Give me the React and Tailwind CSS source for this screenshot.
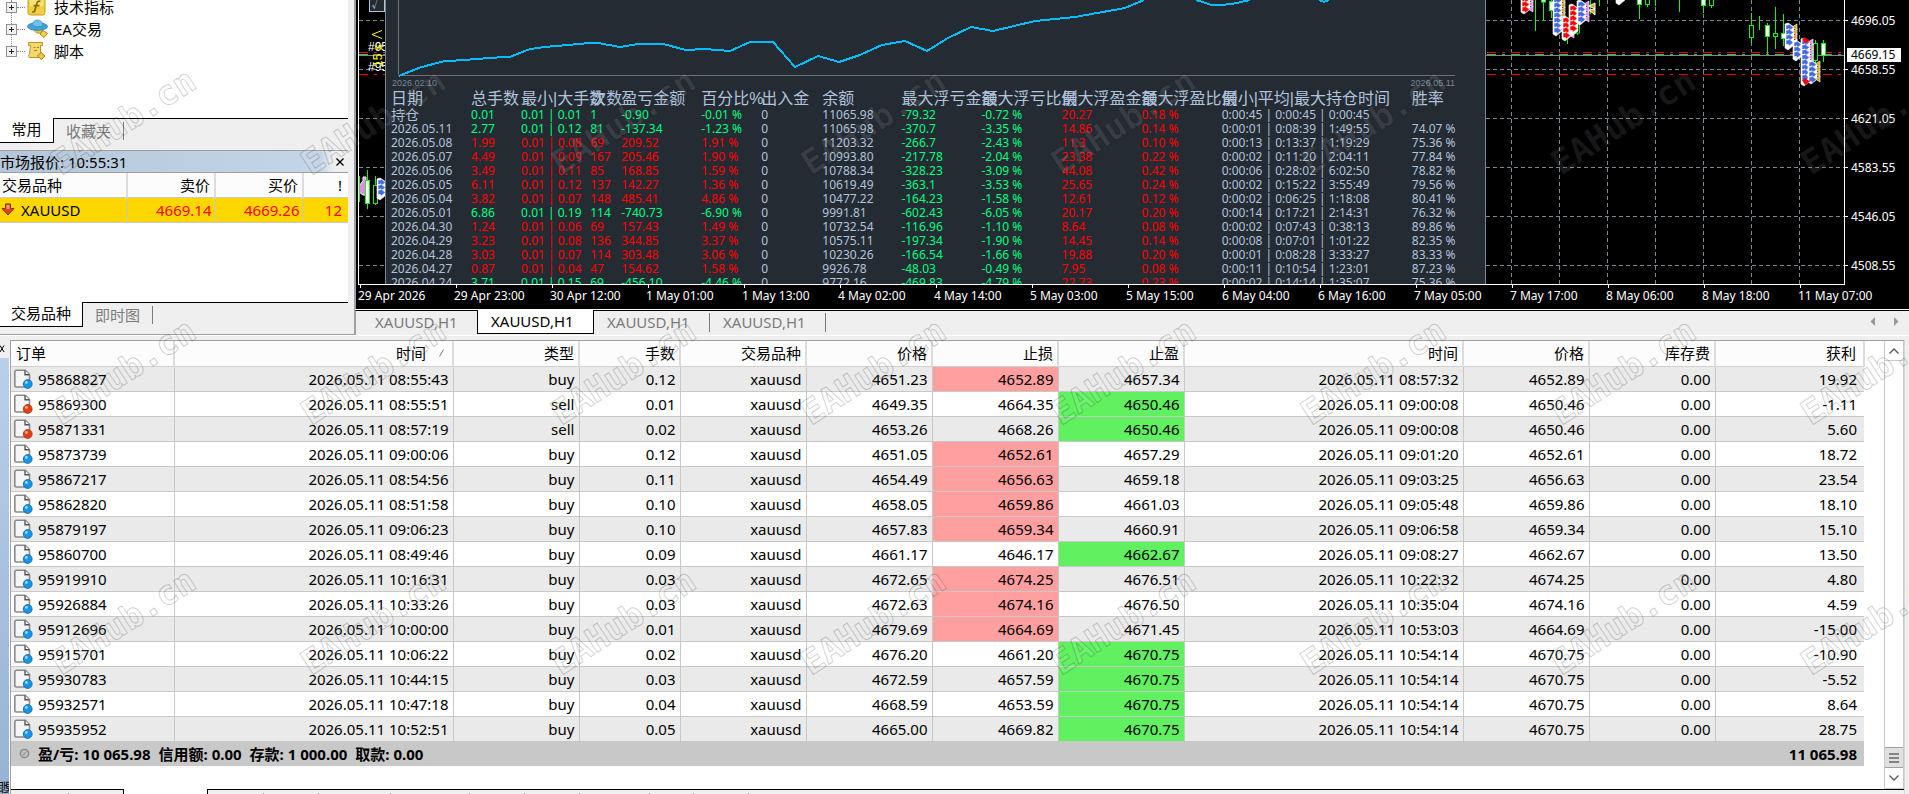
import React from 'react';

const stats = [
  ['持仓', '0.01', '0.01 | 0.01', '1', '-0.90', '-0.01 %', '11065.98', '-79.32', '-0.72 %', '20.27', '0.18 %', '0:00:45 | 0:00:45 | 0:00:45', ''],
  ['2026.05.11', '2.77', '0.01 | 0.12', '81', '-137.34', '-1.23 %', '11065.98', '-370.7', '-3.35 %', '14.86', '0.14 %', '0:00:01 | 0:08:39 | 1:49:55', '74.07 %'],
  ['2026.05.08', '1.99', '0.01 | 0.08', '69', '209.52', '1.91 %', '11203.32', '-266.7', '-2.43 %', '11.3', '0.10 %', '0:00:13 | 0:13:37 | 1:19:29', '75.36 %'],
  ['2026.05.07', '4.49', '0.01 | 0.09', '167', '205.46', '1.90 %', '10993.80', '-217.78', '-2.04 %', '23.38', '0.22 %', '0:00:02 | 0:11:20 | 2:04:11', '77.84 %'],
  ['2026.05.06', '3.49', '0.01 | 0.11', '85', '168.85', '1.59 %', '10788.34', '-328.23', '-3.09 %', '44.08', '0.42 %', '0:00:06 | 0:28:02 | 6:02:50', '78.82 %'],
  ['2026.05.05', '6.11', '0.01 | 0.12', '137', '142.27', '1.36 %', '10619.49', '-363.1', '-3.53 %', '25.65', '0.24 %', '0:00:02 | 0:15:22 | 3:55:49', '79.56 %'],
  ['2026.05.04', '3.82', '0.01 | 0.07', '148', '485.41', '4.86 %', '10477.22', '-164.23', '-1.58 %', '12.61', '0.12 %', '0:00:02 | 0:06:25 | 1:18:08', '80.41 %'],
  ['2026.05.01', '6.86', '0.01 | 0.19', '114', '-740.73', '-6.90 %', '9991.81', '-602.43', '-6.05 %', '20.17', '0.20 %', '0:00:14 | 0:17:21 | 2:14:31', '76.32 %'],
  ['2026.04.30', '1.24', '0.01 | 0.06', '69', '157.43', '1.49 %', '10732.54', '-116.96', '-1.10 %', '8.64', '0.08 %', '0:00:02 | 0:07:43 | 0:38:13', '89.86 %'],
  ['2026.04.29', '3.23', '0.01 | 0.08', '136', '344.85', '3.37 %', '10575.11', '-197.34', '-1.90 %', '14.45', '0.14 %', '0:00:08 | 0:07:01 | 1:01:22', '82.35 %'],
  ['2026.04.28', '3.03', '0.01 | 0.07', '114', '303.48', '3.06 %', '10230.26', '-166.54', '-1.66 %', '19.88', '0.20 %', '0:00:01 | 0:08:28 | 3:33:27', '83.33 %'],
  ['2026.04.27', '0.87', '0.01 | 0.04', '47', '154.62', '1.58 %', '9926.78', '-48.03', '-0.49 %', '7.95', '0.08 %', '0:00:11 | 0:10:54 | 1:23:01', '87.23 %'],
  ['2026.04.24', '3.71', '0.01 | 0.15', '69', '-456.10', '-4.46 %', '9772.16', '-469.83', '-4.79 %', '22.73', '0.23 %', '0:00:02 | 0:14:14 | 1:35:07', '75.36 %'],
];

const statHeads = ['日期', '总手数', '最小|大手数', '次数', '盈亏金额', '百分比%', '出入金', '余额', '最大浮亏金额', '最大浮亏比例', '最大浮盈金额', '最大浮盈比例', '最小|平均|最大持仓时间', '胜率'];
const statCols = ['w-[80px]', 'w-[50px]', 'w-[69px]', 'w-[31px]', 'w-[80px]', 'w-[60px]', 'w-[61px]', 'w-[79px]', 'w-[80px]', 'w-[80px]', 'w-[80px]', 'w-[80px]', 'w-[190px]', 'w-[70px]'];

// order, open time, type, lots, open price, s/l, t/p, close time, close price, profit, which level was hit
const orders = [
  ['95868827', '08:55:43', 'buy', '0.12', '4651.23', '4652.89', '4657.34', '08:57:32', '4652.89', '19.92', 'sl'],
  ['95869300', '08:55:51', 'sell', '0.01', '4649.35', '4664.35', '4650.46', '09:00:08', '4650.46', '-1.11', 'tp'],
  ['95871331', '08:57:19', 'sell', '0.02', '4653.26', '4668.26', '4650.46', '09:00:08', '4650.46', '5.60', 'tp'],
  ['95873739', '09:00:06', 'buy', '0.12', '4651.05', '4652.61', '4657.29', '09:01:20', '4652.61', '18.72', 'sl'],
  ['95867217', '08:54:56', 'buy', '0.11', '4654.49', '4656.63', '4659.18', '09:03:25', '4656.63', '23.54', 'sl'],
  ['95862820', '08:51:58', 'buy', '0.10', '4658.05', '4659.86', '4661.03', '09:05:48', '4659.86', '18.10', 'sl'],
  ['95879197', '09:06:23', 'buy', '0.10', '4657.83', '4659.34', '4660.91', '09:06:58', '4659.34', '15.10', 'sl'],
  ['95860700', '08:49:46', 'buy', '0.09', '4661.17', '4646.17', '4662.67', '09:08:27', '4662.67', '13.50', 'tp'],
  ['95919910', '10:16:31', 'buy', '0.03', '4672.65', '4674.25', '4676.51', '10:22:32', '4674.25', '4.80', 'sl'],
  ['95926884', '10:33:26', 'buy', '0.03', '4672.63', '4674.16', '4676.50', '10:35:04', '4674.16', '4.59', 'sl'],
  ['95912696', '10:00:00', 'buy', '0.01', '4679.69', '4664.69', '4671.45', '10:53:03', '4664.69', '-15.00', 'sl'],
  ['95915701', '10:06:22', 'buy', '0.02', '4676.20', '4661.20', '4670.75', '10:54:14', '4670.75', '-10.90', 'tp'],
  ['95930783', '10:44:15', 'buy', '0.03', '4672.59', '4657.59', '4670.75', '10:54:14', '4670.75', '-5.52', 'tp'],
  ['95932571', '10:47:18', 'buy', '0.04', '4668.59', '4653.59', '4670.75', '10:54:14', '4670.75', '8.64', 'tp'],
  ['95935952', '10:52:51', 'buy', '0.05', '4665.00', '4669.82', '4670.75', '10:54:14', '4670.75', '28.75', 'tp'],
];
const orderHeads = ['订单', '时间', '类型', '手数', '交易品种', '价格', '止损', '止盈', '时间', '价格', '库存费', '获利'];
const orderCols = ['w-[163px]', 'w-[279px]', 'w-[126px]', 'w-[101px]', 'w-[126px]', 'w-[126px]', 'w-[126px]', 'w-[126px]', 'w-[279px]', 'w-[126px]', 'w-[126px]', 'w-[149px]'];

const times = ['29 Apr 2026', '29 Apr 23:00', '30 Apr 12:00', '1 May 01:00', '1 May 13:00', '4 May 02:00', '4 May 14:00', '5 May 03:00', '5 May 15:00', '6 May 04:00', '6 May 16:00', '7 May 05:00', '7 May 17:00', '8 May 06:00', '8 May 18:00', '11 May 07:00'];
const prices = ['4696.05', '4658.55', '4621.05', '4583.55', '4546.05', '4508.55'];

/* ---------- icons ---------- */
function IndicatorIcon() {
  return (
    <svg width="20" height="20" viewBox="0 0 20 20" aria-hidden="true">
      <rect x="1" y="1" width="17" height="17" rx="2.5" fill="#f1cf3d" stroke="#c49a25" />
      <rect x="2.5" y="2.5" width="14" height="7" rx="2" fill="#fbeb8e" opacity=".7" />
      <path d="M13.5 4.5c-2-.8-3.2 0-3.7 2L8 13c-.4 1.700-1.200 2.200-2.800 1.600M6.500 8.600h6" fill="none" stroke="#8a6a12" strokeWidth="1.800" />
    </svg>
  );
}
function ExpertIcon() {
  return (
    <svg width="22" height="20" viewBox="0 0 22 20" aria-hidden="true">
      <path d="M6 9c1 4 4 6 8 5l2-4z" fill="#e9c33c" stroke="#b38a1d" strokeWidth=".8" />
      <path d="M16 11.500l4.500 3-3.500 4-4-3.500z" fill="#f3cf4a" stroke="#a87c17" strokeWidth=".9" />
      <ellipse cx="10.500" cy="7.500" rx="10" ry="3.800" fill="#3fa3d8" stroke="#1f7db4" strokeWidth=".8" />
      <path d="M5.500 6.500C5.800 2.500 8 1 10.500 1s5 1.500 5.200 5.500c-3 1.500-7 1.500-10.200 0z" fill="#71c3ea" stroke="#2b8cc2" strokeWidth=".7" />
    </svg>
  );
}
function ScriptIcon() {
  return (
    <svg width="20" height="20" viewBox="0 0 20 20" aria-hidden="true">
      <path d="M1.500 1.500h14v3h-2v9h2v3h-13c-1.500-1-1.500-2.500 0-3.500l1-8.500h-2z" fill="#f4d968" stroke="#bb9227" />
      <path d="M6.500 6.500h2M10 6.500h2M7 9.500h3" stroke="#a9821f" />
      <path d="M14 11.500l4 3.500-3.500 3.500-4-3.500z" fill="#efc93f" stroke="#a87c17" />
    </svg>
  );
}
function DocIcon({ sell }) {
  return (
    <svg className="shrink-0" width="20" height="20" viewBox="0 0 20 20" aria-hidden="true">
      <path d="M3.500 1.200h8.800l4.200 4.300v10a2.500 2.500 0 0 1-2.500 2.500H3.500A1.700 1.700 0 0 1 1.800 16.300V3A1.700 1.700 0 0 1 3.500 1.200z" fill="#f6f6f6" stroke="#8a8a8a" strokeWidth="1.600" />
      <path d="M12 1.500v4.300h4.300" fill="#fff" stroke="#555" strokeWidth="1.400" />
      <circle cx="14.700" cy="15" r="4.400" fill={sell ? '#e8400c' : '#1397ea'} stroke={sell ? '#a83310' : '#1668a4'} strokeWidth=".9" />
      <circle cx="13.400" cy="13.500" r="1.400" fill="#fff" opacity=".6" />
    </svg>
  );
}
function DownArrowIcon() {
  return (
    <svg width="14" height="13" viewBox="0 0 14 13" aria-hidden="true">
      <path d="M4.500 1h5v4.500H13L7 12 1 5.500h3.500z" fill="#e2451b" stroke="#8c2b10" />
      <path d="M5.500 2h3v4h-3z" fill="#ff9a6e" />
    </svg>
  );
}

/* ---------- left docks ---------- */
const tree = [['技术指标', IndicatorIcon], ['EA交易', ExpertIcon], ['脚本', ScriptIcon]];

function DockTabs({ active, other, activeWidth }) {
  return (
    <div className="flex h-[32px] shrink-0 bg-[#efefef] text-[15px] leading-[22px]">
      <button className={activeWidth + ' h-[25px] shrink-0 whitespace-nowrap border-b border-r border-black bg-white pb-[2px] text-center'}>{active}</button>
      <div className="flex min-w-0 flex-1 items-start border-t border-black text-[#7b7b7b]">
        <button className="mt-[3px] h-[18px] border-r border-[#7b7b7b] px-3 leading-[18px]">{other}</button>
      </div>
    </div>
  );
}

function LeftDock() {
  return (
    <aside className="flex h-[335px] w-[355px] shrink-0 flex-col border-b border-r border-[#a0a0a0] bg-[#efefef] pr-[6px]">
      <section className="flex flex-col bg-white">
        <ul className="relative h-[118px] overflow-hidden">
          <li className="absolute left-[11px] top-0 h-[52px] border-l border-dotted border-[#888]" aria-hidden="true" />
          {tree.map(([name, Icon], i) => (
            <li key={name} className={(i === 0 ? '-mt-1 ' : '') + 'flex h-[22px] items-center text-[15px]'}>
              <button className="relative ml-[6px] flex h-[11px] w-[11px] items-center justify-center border border-[#919191] bg-[#f0f0f0]" aria-label={name}>
                <svg width="7" height="7" viewBox="0 0 7 7"><path d="M3.500 1v5M1 3.500h5" stroke="#222" /></svg>
              </button>
              <span className="w-[8px] border-t border-dotted border-[#888]" />
              <span className="ml-[2px] w-[27px]"><Icon /></span>
              <span>{name}</span>
            </li>
          ))}
        </ul>
        <DockTabs active="常用" other="收藏夹" activeWidth="w-[54px]" />
      </section>
      <section className="flex min-h-0 flex-1 flex-col border-t border-[#a0a0a0] bg-white">
        <header className="flex h-[22px] items-center justify-between border-b border-[#a0a0a0] bg-linear-to-r from-[#b4c6d9] from-0% via-[#c4d5e7] via-92% to-[#efefef] to-96% pr-[3px]">
          <h2 className="whitespace-nowrap text-[15px] leading-[18px]">市场报价: 10:55:31</h2>
          <button aria-label="关闭" className="flex h-[10px] w-[10px] items-center justify-center">
            <svg width="8" height="8" viewBox="0 0 8 8"><path d="M.5.5l7 7M7.500.5l-7 7" stroke="#000" strokeWidth="1.400" /></svg>
          </button>
        </header>
        <table className="w-full table-fixed border-collapse text-[15px] leading-[20px]">
          <colgroup><col className="w-[127px]" /><col className="w-[88px]" /><col className="w-[88px]" /><col className="w-[45px]" /></colgroup>
          <thead>
            <tr className="h-[24px] bg-[#fcfcfc]">
              <th className="border-r-2 border-[#dcdcdc] p-0 pl-[2px] text-left font-normal">交易品种</th>
              <th className="border-r-2 border-[#dcdcdc] p-0 pr-1 text-right font-normal">卖价</th>
              <th className="border-r-2 border-[#dcdcdc] p-0 pr-1 text-right font-normal">买价</th>
              <th className="p-0 pr-[6px] text-right font-normal">!</th>
            </tr>
          </thead>
          <tbody>
            <tr className="h-[25px] border-y border-[#c8c8c8] bg-[#ffd700] text-[#ff0000]">
              <td className="border-r border-[#c8c8c8] p-0 text-black"><span className="flex items-center gap-[6px] pl-px"><DownArrowIcon />XAUUSD</span></td>
              <td className="border-r border-[#c8c8c8] p-0 pr-[3px] text-right">4669.14</td>
              <td className="border-r border-[#c8c8c8] p-0 pr-[3px] text-right">4669.26</td>
              <td className="p-0 pr-[6px] text-right">12</td>
            </tr>
          </tbody>
        </table>
        <div className="flex-1" />
        <DockTabs active="交易品种" other="即时图" activeWidth="w-[83px]" />
      </section>
    </aside>
  );
}

/* ---------- chart ---------- */
function Candle({ x, hi, lo, top, bottom, hollow }) {
  return (
    <g stroke="#00ff00">
      <path d={`M${x} ${hi}V${lo}`} />
      {bottom !== undefined && <rect x={x - 2} y={top} width="4" height={bottom - top} fill={hollow ? '#000' : '#fff'} />}
    </g>
  );
}

function Arrows({ x, y, to, fill, side }) {
  const marks = [];
  for (let t = y; t < to - 4; t += 5) marks.push(t);
  return (
    <g strokeWidth=".6" stroke="#fff">
      <path d={`M${x} ${y - 1}L${x + 3} ${y - 2}L${x + 9} ${y + 2}V${to - 3}L${x + 3} ${to + 2}L${x} ${to}Z`} fill="#fff" />
      {marks.map((t) => (
        <g key={t}>
          {side && <path d={`M${x + 12} ${t - 1}v6l-5-3z`} fill={side} />}
          <path d={`M${x + 1} ${t}h2.500v-1.500l5 4l-5 4v-2h-2.500z`} fill={fill} />
        </g>
      ))}
    </g>
  );
}

function Plot() {
  const h = [20.5, 69.5, 118.5, 167.5, 216.5, 265.5];
  const v = [1511.5, 1559.500, 1607.5, 1655.5, 1703.5, 1751.5, 1799.5];
  return (
    <svg className="absolute inset-0 h-full w-full" aria-hidden="true">
      <g transform="translate(-359 0)" fill="none">
        <g stroke="#778899" strokeDasharray="4 3">
          {h.map((y) => <path key={y} d={`M359 ${y}H1844`} />)}
          {v.map((x) => <path key={x} d={`M${x} 0V284`} />)}
        </g>
        <path d="M359 52.500H1844M359 74.500H1844" stroke="#ff0000" strokeDasharray="9 6 3 6" />
        <path d="M359 54.500H1844" stroke="#32cd32" strokeDasharray="9 6 3 6" />
        <path d="M359 55.500H1844" stroke="#778899" />

        <Candle x={1535.500} hi={0} lo={31} />
        <Candle x={1543.500} hi={0} lo={21} top={-2} bottom={2} />
        <Candle x={1551.500} hi={0} lo={18} top={1.500} bottom={10.500} />
        <Candle x={1567.500} hi={20} lo={44} />
        <Candle x={1577.500} hi={4} lo={35} top={20} bottom={33} hollow />
        <Candle x={1590.500} hi={0} lo={14} />
        <Candle x={1599.500} hi={0} lo={6} />
        <Candle x={1639.500} hi={0} lo={19} top={-2} bottom={4.500} />
        <Candle x={1647.500} hi={0} lo={7} top={-2} bottom={4.500} hollow />
        <Candle x={1655.500} hi={0} lo={6} />
        <Candle x={1679.500} hi={0} lo={12} />
        <Candle x={1703.500} hi={0} lo={13} top={-2} bottom={5.500} />
        <Candle x={1711.500} hi={0} lo={8} top={-2} bottom={5.500} hollow />
        <Candle x={1751.500} hi={13} lo={43} top={25.500} bottom={37.500} hollow />
        <Candle x={1759.500} hi={16} lo={30} top={25.500} bottom={25.500} />
        <Candle x={1767.500} hi={23} lo={54} top={25.500} bottom={36.500} />
        <Candle x={1775.500} hi={7} lo={49} top={33.500} bottom={36.500} hollow />
        <Candle x={1783.500} hi={14} lo={46} top={33.500} bottom={38.500} />
        <Candle x={1815.500} hi={40} lo={66} top={43.500} bottom={60.500} hollow />
        <Candle x={1823.500} hi={40} lo={62} top={43.500} bottom={55.500} />

        <Arrows x={1521} y={-3} to={12} fill="#ff0000" side="#ee82ee" />
        <Arrows x={1553} y={-2} to={34} fill="#4169e1" side="#daa520" />
        <Arrows x={1562} y={18} to={39} fill="#ff0000" side="#ee82ee" />
        <Arrows x={1569} y={6} to={34} fill="#ff0000" />
        <Arrows x={1577} y={2} to={23} fill="#4169e1" side="#ee82ee" />
        <path d="M1595 3v12l-6-5 6-1-6-3z" fill="#daa520" stroke="#fff" />
        <Arrows x={1616} y={-6} to={3} fill="#ff0000" side="#ee82ee" />
        <Arrows x={1785} y={25} to={48} fill="#4169e1" side="#daa520" />
        <Arrows x={1793} y={42} to={59} fill="#4169e1" />
        <Arrows x={1801} y={40} to={84} fill="#4169e1" side="#ee82ee" />
        <Arrows x={1808} y={62} to={82} fill="#4169e1" side="#daa520" />
        <path d="M1802 39l3-1.500 5 3.500-5 2zM1802 80l3-2 5 3.500-5 3.500z" fill="#ff0000" />

        <path d="M359 186l4-5v-4h3v18h-3l-4-3z" fill="#ee82ee" stroke="#fff" />
        <Candle x={359.500} hi={176} lo={202} />
        <Candle x={367.500} hi={170} lo={209} top={180.500} bottom={203.500} />
        <Candle x={375.500} hi={176} lo={205} top={185.500} bottom={203.500} hollow />
        <Arrows x={377} y={180} to={198} fill="#4169e1" side="#daa520" />
        <g fill="#fff" fontFamily="Liberation Sans" fontSize="12">
          <text x="368" y="51">#95</text>
          <text x="368" y="71">#95</text>
        </g>
        <path d="M382 30.500l-10 4 10 4" stroke="#ffff00" />
        <text transform="translate(382 67) rotate(-90)" fill="#ffff00" fontFamily="Liberation Sans" fontSize="12">15 s</text>
      </g>
    </svg>
  );
}

function StatsPanel() {
  return (
    <div className="absolute left-[26px] top-0 h-full w-[1101px] overflow-hidden border-x border-[#778899] bg-[#252b33] text-[#b0c4de]">
      <svg className="block h-[77px] w-full" aria-hidden="true">
        <g transform="translate(-386 0)" fill="none">
          <path d="M398.500 0V75.500H1455" stroke="#707070" />
          <path d="M399 76L420 67.500L443 61.500L490 58L511 56.500L530 49L545 47L595 42.500L620 47L638 44L663 44L686 50L705 49L730 51L750 42H773L795 67L818 56L839 62L860 55L882 45L905 41L927 51L948 38L971 27L993 31L1035 21L1075 17L1125 8L1144 0" stroke="#00bfff" strokeWidth="2" shapeRendering="crispEdges" />
          <path d="M1196 0L1213 5.500L1232 4L1250 0M1319 0L1324 2L1329 0" stroke="#00bfff" strokeWidth="2" shapeRendering="crispEdges" />
        </g>
      </svg>
      <div className="flex h-[13px] justify-between pl-[6px] pr-[30px] font-['Liberation_Sans',sans-serif] text-[9px] leading-[12px] text-[#778899]">
        <span>2026.02.10</span><span>2026.05.11</span>
      </div>
      <table className="ml-[5px] w-[1091px] table-fixed border-collapse text-left text-[12px]">
        <colgroup>{statCols.map((c, i) => <col key={i} className={c} />)}</colgroup>
        <thead>
          <tr className="h-[18px] whitespace-nowrap font-['Liberation_Sans','Noto_Sans_CJK_SC',sans-serif] text-[16px] leading-[18px]">
            {statHeads.map((t, i) => <th key={i} className="p-0 font-normal">{t}</th>)}
          </tr>
        </thead>
        <tbody>
          {stats.map((r) => {
            const tone = r[4].startsWith('-') ? 'text-[#00ff7f]' : 'text-[#ff0000]';
            return (
              <tr key={r[0]} className="h-[14px] whitespace-nowrap leading-[14px]">
                <td className={r[0] === '持仓' ? 'p-0 text-[14px]' : 'p-0'}>{r[0]}</td>
                {[1, 2, 3, 4, 5].map((k) => <td key={k} className={'p-0 ' + tone}>{r[k]}</td>)}
                <td className="p-0">0</td>
                <td className="p-0">{r[6]}</td>
                <td className="p-0 text-[#00ff7f]">{r[7]}</td>
                <td className="p-0 text-[#00ff7f]">{r[8]}</td>
                <td className="p-0 text-[#ff0000]">{r[9]}</td>
                <td className="p-0 text-[#ff0000]">{r[10]}</td>
                <td className="p-0">{r[11]}</td>
                <td className="p-0">{r[12]}</td>
              </tr>
            );
          })}
        </tbody>
      </table>
    </div>
  );
}

function Chart() {
  return (
    <section className="flex h-[309px] shrink-0 flex-col border-l border-[#a0a0a0] bg-black pl-[2px] text-[12px] text-white">
      <div className="flex h-[285px] shrink-0">
        <div className="relative min-w-0 flex-1 overflow-hidden border-b border-l border-r border-white">
          <Plot />
          <button className="absolute left-[10px] top-[-4px] flex h-[16px] w-[16px] items-center justify-center border border-[#b0c4de] bg-[#252b33] text-[11px] leading-[14px] text-[#b0c4de]">√</button>
          <StatsPanel />
        </div>
        <div className="relative w-[64px] shrink-0 pt-[12px]">
          {prices.map((p) => (
            <div key={p} className="flex h-[49px] items-start leading-[17px]">
              <span className="mt-[8px] w-[3px] border-t border-white" />
              <span className="pl-[3px]">{p}</span>
            </div>
          ))}
          <span className="absolute left-[2px] top-[48px] h-[14px] w-[54px] bg-white pl-[4px] leading-[14px] text-black">4669.15</span>
        </div>
      </div>
      <div className="flex min-h-0 flex-1 overflow-hidden">
        {times.map((t) => (
          <div key={t} className="w-[96px] shrink-0 whitespace-nowrap">
            <div className="ml-[2px] h-[3px] border-l border-white" />
            <div className="leading-[16px]">{t}</div>
          </div>
        ))}
      </div>
    </section>
  );
}

function ChartTabs() {
  return (
    <nav className="flex h-[25px] shrink-0 bg-[#efefef] text-left text-[15px] leading-[20px] text-[#7b7b7b]">
      <button className="w-[122px] border-l border-t border-l-[#a0a0a0] border-t-black pb-[3px] pl-[19px] text-left">XAUUSD,H1</button>
      <button className="h-[24px] w-[117px] border-x border-b border-black bg-white pb-[1px] pl-[13px] text-left text-black">XAUUSD,H1</button>
      <div className="flex min-w-0 flex-1 items-start border-t border-black">
        <button className="mt-[2px] h-[19px] w-[116px] border-r border-[#7b7b7b] pl-[13px] text-left leading-[17px]">XAUUSD,H1</button>
        <button className="mt-[2px] h-[19px] w-[116px] border-r border-[#7b7b7b] pl-[13px] text-left leading-[17px]">XAUUSD,H1</button>
        <div className="ml-auto mr-[10px] mt-[6px] flex gap-[19px]">
          <button aria-label="上一个"><svg width="5" height="9" viewBox="0 0 5 9"><path d="M5 0v9L.5 4.500z" fill="#9a9a9a" /></svg></button>
          <button aria-label="下一个"><svg width="5" height="9" viewBox="0 0 5 9"><path d="M0 0v9l4.500-4.500z" fill="#9a9a9a" /></svg></button>
        </div>
      </div>
    </nav>
  );
}

/* ---------- terminal ---------- */
function OrderTable() {
  const cell = 'border-r border-[#c8c8c8] pr-1 text-right';
  return (
    <table className="w-full table-fixed border-collapse whitespace-nowrap text-[15px] leading-[22px]">
      <colgroup>{orderCols.map((c, i) => <col key={i} className={c} />)}</colgroup>
      <thead>
        <tr className="h-[25px] border-b border-[#d0d0d0] bg-[#fcfcfc]">
          {orderHeads.map((t, i) => (
            <th key={i} className={(i === 0 ? 'pl-[5px] text-left' : i === 11 ? 'pr-[7px] text-right' : 'pr-[4px] text-right') + ' border-r-2 border-[#dcdcdc] font-normal'}>
              {i === 1 ? (
                <span className="flex items-center justify-end gap-[13px] pr-[4px]">{t}
                  <svg width="5" height="8" viewBox="0 0 5 8" aria-hidden="true"><path d="M.5 7.500l4-7" stroke="#777" /></svg>
                </span>
              ) : t}
            </th>
          ))}
        </tr>
      </thead>
      <tbody>
        {orders.map((o, i) => (
          <tr key={o[0]} className={(i % 2 ? 'bg-white' : 'bg-[#eaeaea]') + ' h-[25px] border-b border-[#c8c8c8]'}>
            <td className="border-r border-[#c8c8c8] p-0"><span className="flex h-[22px] items-center gap-[5px] pl-[2px]"><DocIcon sell={o[2] === 'sell'} />{o[0]}</span></td>
            <td className={cell}>2026.05.11 {o[1]}</td>
            <td className={cell}>{o[2]}</td>
            <td className={cell}>{o[3]}</td>
            <td className={cell}>xauusd</td>
            <td className={cell}>{o[4]}</td>
            <td className={cell + (o[10] === 'sl' ? ' bg-[#ff9f9f]' : '')}>{o[5]}</td>
            <td className={cell + (o[10] === 'tp' ? ' bg-[#60f060]' : '')}>{o[6]}</td>
            <td className={cell}>2026.05.11 {o[7]}</td>
            <td className={cell}>{o[8]}</td>
            <td className={cell}>0.00</td>
            <td className="pr-[7px] text-right">{o[9]}</td>
          </tr>
        ))}
      </tbody>
      <tfoot>
        <tr className="h-[25px] bg-[#c8c8c8] text-[15px] font-bold">
          <td colSpan={11} className="p-0">
            <span className="flex items-center gap-[8px] pl-[8px]">
              <svg width="11" height="11" viewBox="0 0 11 11" aria-hidden="true"><circle cx="5.500" cy="5.500" r="4.200" fill="#bbb" stroke="#8a8a8a" strokeWidth="1.300" /><path d="M3.500 7.500l4-4" stroke="#8a8a8a" /></svg>
              <span className="flex gap-2"><span>盈/亏: 10 065.98</span><span>信用额: 0.00</span><span>存款: 1 000.00</span><span>取款: 0.00</span></span>
            </span>
          </td>
          <td className="pr-[7px] text-right">11 065.98</td>
        </tr>
      </tfoot>
    </table>
  );
}

const bottomTabs = ['w-[56px]', 'w-[55px]', 'w-[72px]', 'w-[79px]', 'w-[55px]', 'w-[55px]', 'w-[70px]', 'w-[44px]', 'w-[55px]'];

function Terminal() {
  return (
    <section className="flex min-h-0 flex-1 bg-[#efefef]">
      <div className="flex w-[10px] shrink-0 flex-col overflow-hidden">
        <button aria-label="关闭" className="h-[18px]">
          <svg width="5" height="8" viewBox="0 0 5 8"><path d="M0 .5L4 7M4 .5L0 7" stroke="#000" /></svg>
        </button>
        <div className="flex flex-1 items-end overflow-hidden border-r border-white bg-linear-to-b from-[#b8d0ec] to-[#98b2d4]">
          <span className="h-[10px] text-[13px] leading-[10px] [writing-mode:sideways-lr]">端</span>
        </div>
      </div>
      <div className="flex min-w-0 flex-1 flex-col border-l border-t border-[#a0a0a0] bg-white">
        <div className="flex h-[448px] shrink-0">
          <div className="min-w-0 flex-1"><OrderTable /></div>
          <div className="ml-[20px] flex w-[20px] flex-col border-x border-[#c8c8c8] bg-white">
            <button aria-label="向上" className="flex h-[20px] items-center justify-center border-b border-[#c8c8c8]"><svg width="10" height="6" viewBox="0 0 10 6"><path d="M.5 5.500L5 1l4.500 4.500" fill="none" stroke="#555" strokeWidth="1.300" /></svg></button>
            <div className="flex-1" />
            <div className="flex h-[21px] items-center justify-center border-y border-[#a0a0a0] bg-[#e0e0e0]"><svg width="10" height="10" viewBox="0 0 10 10"><path d="M0 1h10M0 5h10M0 9h10" stroke="#666" strokeWidth="1.500" /></svg></div>
            <button aria-label="向下" className="flex h-[21px] items-center justify-center border-b border-[#c8c8c8]"><svg width="10" height="6" viewBox="0 0 10 6"><path d="M.5.5L5 5 9.500.5" fill="none" stroke="#555" strokeWidth="1.300" /></svg></button>
          </div>
        </div>
        <div className="flex flex-1">
          <div className="flex w-[113px] border-r border-t border-black bg-[#f0f0f0]"><div className="mt-[3px] w-[58px] border-r border-[#888]" /></div>
          <div className="w-[83px]" />
          <div className="flex flex-1 border-l border-t border-black bg-[#f0f0f0]">
            {bottomTabs.map((w, i) => <div key={i} className={w + ' mt-[3px] border-r border-[#888]'} />)}
          </div>
        </div>
      </div>
      <div className="w-[5px] border-l border-[#d8d8d8]" />
    </section>
  );
}

function Watermarks() {
  const marks = [];
  for (let r = 0; r < 3; r += 1) for (let c = 0; c < 8; c += 1) marks.push([61 + 250 * c, 176 + 250 * r]);
  return (
    <svg className="pointer-events-none absolute inset-0 h-full w-full" aria-hidden="true">
      <g fill="#ffffff" fillOpacity=".1" stroke="#000000" strokeOpacity=".2" fontFamily="DejaVu Sans Mono" fontWeight="bold" fontSize="34">
        {marks.map(([x, y]) => <text key={x + '-' + y} transform={`translate(${x} ${y}) rotate(-33)`}>EAHub.cn</text>)}
      </g>
    </svg>
  );
}

export default function App() {
  return (
    <main className="relative flex h-screen flex-col overflow-hidden bg-[#efefef] font-['Noto_Sans','Noto_Sans_CJK_SC',sans-serif] text-black">
      <div className="flex shrink-0">
        <LeftDock />
        <div className="flex min-w-0 flex-1 flex-col">
          <Chart />
          <div className="h-px bg-white" />
          <ChartTabs />
        </div>
      </div>
      <div className="mb-[4px] h-px shrink-0 bg-white" />
      <Terminal />
      <Watermarks />
    </main>
  );
}
